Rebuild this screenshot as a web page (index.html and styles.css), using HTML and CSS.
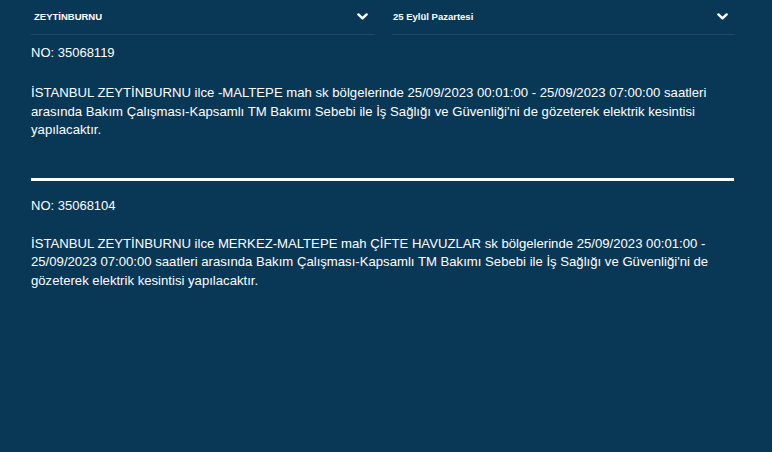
FILE: index.html
```html
<!DOCTYPE html>
<html lang="tr">
<head>
<meta charset="utf-8">
<title>Kesinti</title>
<link rel="stylesheet" href="styles.css">
</head>
<body>
<div class="page">
  <div class="filters">
    <div class="select">
      <span class="select-label">ZEYTİNBURNU</span>
      <svg class="chev" width="11" height="7" viewBox="0 0 11 7"><polyline points="1.4,1.4 5.5,5.4 9.6,1.4" fill="none" stroke="#fff" stroke-width="2.4" stroke-linecap="round" stroke-linejoin="round"/></svg>
    </div>
    <div class="select">
      <span class="select-label">25 Eylül Pazartesi</span>
      <svg class="chev" width="11" height="7" viewBox="0 0 11 7"><polyline points="1.4,1.4 5.5,5.4 9.6,1.4" fill="none" stroke="#fff" stroke-width="2.4" stroke-linecap="round" stroke-linejoin="round"/></svg>
    </div>
  </div>
  <div class="item">
    <p class="no">NO: 35068119</p>
    <p class="desc">İSTANBUL ZEYTİNBURNU ilce -MALTEPE mah sk bölgelerinde 25/09/2023 00:01:00 - 25/09/2023 07:00:00 saatleri arasında Bakım Çalışması-Kapsamlı TM Bakımı Sebebi ile İş Sağlığı ve Güvenliği'ni de gözeterek elektrik kesintisi yapılacaktır.</p>
  </div>
  <hr class="rule">
  <div class="item item-second">
    <p class="no">NO: 35068104</p>
    <p class="desc">İSTANBUL ZEYTİNBURNU ilce MERKEZ-MALTEPE mah ÇİFTE HAVUZLAR sk bölgelerinde 25/09/2023 00:01:00 - 25/09/2023 07:00:00 saatleri arasında Bakım Çalışması-Kapsamlı TM Bakımı Sebebi ile İş Sağlığı ve Güvenliği'ni de gözeterek elektrik kesintisi yapılacaktır.</p>
  </div>
</div>
</body>
</html>
```
FILE: styles.css
```css
html, body {
  margin: 0;
  padding: 0;
  background: #093856;
  height: 100%;
}
body {
  color: #fff;
  font-family: "Liberation Sans", Arial, sans-serif;
}
.page {
  width: 704px;
  padding-left: 31px;
}
.filters {
  display: flex;
  gap: 17px;
}
.select {
  flex: 0 0 344px;
  height: 35px;
  box-sizing: border-box;
  border-bottom: 1px solid rgba(255, 255, 255, 0.09);
  display: flex;
  align-items: center;
  justify-content: space-between;
  padding: 0 7px 0 3px;
}
.select:last-child {
  flex-basis: 343px;
  padding-left: 1px;
}
.select-label {
  font-size: 9.5px;
  font-weight: bold;
  margin-top: -2px;
}
.chev {
  display: block;
  margin-top: -2px;
}
.item {
  padding-top: 9px;
}
.no {
  margin: 0;
  font-size: 13px;
  line-height: 18px;
}
.desc {
  margin: 22px 0 0;
  font-size: 13.15px;
  line-height: 18.5px;
}
.rule {
  margin: 38px 0 0;
  border: 0;
  height: 3px;
  width: 703px;
  background: #fff;
}
.item-second {
  padding-top: 16px;
}
.item-second .desc {
  margin-top: 20px;
}
```
